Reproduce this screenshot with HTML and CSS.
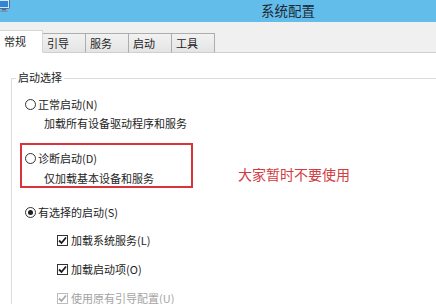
FILE: index.html
```html
<!DOCTYPE html>
<html lang="zh-CN">
<head>
<meta charset="utf-8">
<title>系统配置</title>
<link rel="stylesheet" href="styles.css">
</head>
<body>
<div class="window">
  <div class="titlebar">
    <svg class="app-icon" width="12" height="14" viewBox="0 0 12 14">
      <rect x="0.5" y="0.5" width="11" height="9" rx="1" fill="#d9e6f2" stroke="#3a6fb0"/>
      <rect x="2" y="2" width="8" height="6" fill="#2f86d8"/>
      <rect x="4" y="10" width="4" height="1.5" fill="#5a6f86"/>
      <rect x="2.5" y="11.5" width="7" height="1.5" fill="#7d8fa3"/>
    </svg>
    <span class="title">系统配置</span>
  </div>
  <div class="tabstrip">
    <div class="tab active">常规</div>
    <div class="tab">引导</div>
    <div class="tab">服务</div>
    <div class="tab">启动</div>
    <div class="tab">工具</div>
  </div>
  <div class="page">
    <div class="group">
      <span class="group-title">启动选择</span>
      <div class="option first"><span class="radio"></span>正常启动(N)</div>
      <div class="desc">加载所有设备驱动程序和服务</div>
      <div class="highlight-row">
        <div class="highlight">
          <div class="option"><span class="radio"></span>诊断启动(D)</div>
          <div class="desc">仅加载基本设备和服务</div>
        </div>
        <div class="note">大家暂时不要使用</div>
      </div>
      <div class="option selective"><span class="radio checked"></span>有选择的启动(S)</div>
      <div class="check-item c1"><span class="checkbox"><svg width="9" height="9" viewBox="0 0 9 9"><path d="M1 4.5 L3.5 7 L8 1.5" fill="none" stroke="#1a1a1a" stroke-width="1.8"/></svg></span>加载系统服务(L)</div>
      <div class="check-item c2"><span class="checkbox"><svg width="9" height="9" viewBox="0 0 9 9"><path d="M1 4.5 L3.5 7 L8 1.5" fill="none" stroke="#1a1a1a" stroke-width="1.8"/></svg></span>加载启动项(O)</div>
      <div class="check-item c3 disabled"><span class="checkbox"><svg width="9" height="9" viewBox="0 0 9 9"><path d="M1 4.5 L3.5 7 L8 1.5" fill="none" stroke="#a8a8a8" stroke-width="1.8"/></svg></span>使用原有引导配置(U)</div>
    </div>
  </div>
</div>
</body>
</html>
```

FILE: styles.css
```css
* { box-sizing: border-box; }
html, body {
  margin: 0;
  padding: 0;
  background: #ffffff;
}
body {
  width: 436px;
  height: 304px;
  overflow: hidden;
  font-family: "Noto Sans CJK SC", "Microsoft YaHei", sans-serif;
  font-size: 11px;
  color: #1e1e1e;
}
.window {
  width: 436px;
  height: 304px;
  overflow: hidden;
  background: #ffffff;
}
.titlebar {
  height: 22px;
  background: #63bdea;
  display: flex;
  align-items: flex-start;
}
.app-icon {
  margin-left: -2px;
  margin-top: -1px;
  flex: none;
}
.title {
  margin-left: 251px;
  font-size: 13.5px;
  line-height: 20px;
  color: #1c2a36;
}
.tabstrip {
  height: 31px;
  background: #f0f0f0;
  display: flex;
  align-items: flex-end;
  border-bottom: 1px solid #cfcfcf;
}
.tab {
  width: 43px;
  height: 20px;
  margin-bottom: -1px;
  padding-left: 4px;
  line-height: 18px;
  background: linear-gradient(#f2f2f2, #e4e4e4);
  border: 1px solid #adadad;
  border-left: none;
  border-bottom: 1px solid #cfcfcf;
  color: #1e1e1e;
}
.tab.active {
  height: 23px;
  background: #ffffff;
  border: 1px solid #d6d6d6;
  border-left: none;
  border-bottom: 1px solid #ffffff;
  line-height: 21px;
  position: relative;
  z-index: 1;
}
.page {
  padding-top: 25px;
}
.group {
  position: relative;
  margin-left: 11px;
  width: 460px;
  height: 260px;
  border-top: 1px solid #dcdcdc;
  border-left: 1px solid #dcdcdc;
}
.group-title {
  position: absolute;
  top: -9px;
  left: 4px;
  padding: 0 2px;
  background: #ffffff;
  line-height: 14px;
  color: #1e1e1e;
}
.option {
  display: flex;
  align-items: center;
  height: 16px;
}
.option.first { margin-top: 17px; }
.option.selective { margin-top: 16px; }
.radio {
  width: 11px;
  height: 11px;
  margin-left: 13px;
  margin-right: 2px;
  border: 1px solid #333333;
  border-radius: 50%;
  background: #ffffff;
  display: flex;
  align-items: center;
  justify-content: center;
  flex: none;
}
.radio.checked::after {
  content: "";
  width: 5px;
  height: 5px;
  border-radius: 50%;
  background: #1e1e1e;
}
.desc {
  margin-top: 3px;
  padding-left: 32px;
  height: 16px;
  line-height: 16px;
}
.highlight-row {
  display: flex;
  align-items: center;
  margin-top: 12px;
  margin-left: 8px;
}
.highlight {
  width: 173px;
  border: 2px solid #d8343c;
  padding-top: 5px;
}
.highlight .radio { margin-left: 3px; }
.highlight .desc {
  margin-top: 4px;
  padding-left: 22px;
}
.note {
  margin-left: 45px;
  padding-top: 17px;
  font-size: 14px;
  line-height: 18px;
  color: #d23b40;
}
.check-item {
  display: flex;
  align-items: center;
  height: 16px;
}
.check-item.c1 { margin-top: 12px; }
.check-item.c2, .check-item.c3 { margin-top: 13px; }
.checkbox {
  width: 11px;
  height: 11px;
  margin-left: 45px;
  margin-right: 3px;
  border: 1px solid #333333;
  background: #ffffff;
  display: flex;
  align-items: center;
  justify-content: center;
  flex: none;
}
.check-item.disabled { color: #a3a3a3; }
.check-item.disabled .checkbox { border-color: #bcbcbc; }
```
